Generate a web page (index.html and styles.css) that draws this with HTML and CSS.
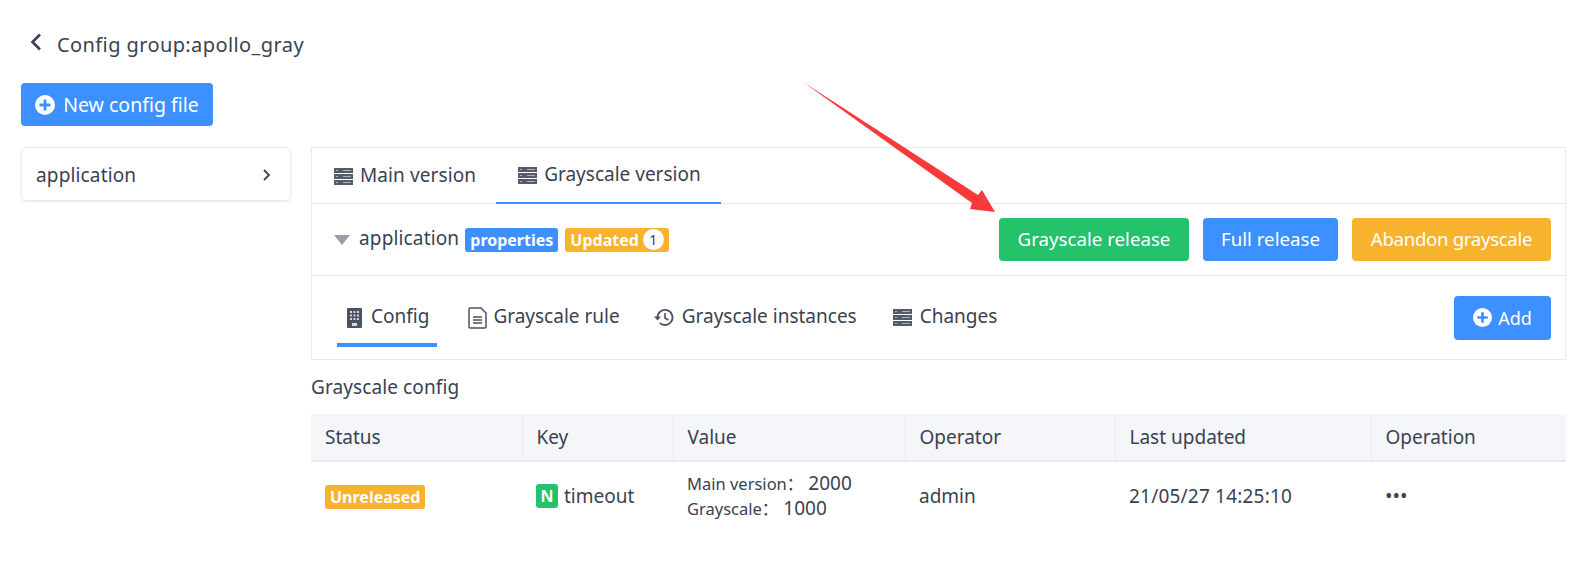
FILE: index.html
```html
<!DOCTYPE html>
<html lang="en">
<head>
  <meta charset="UTF-8">
  <title>Config group</title>
  <link rel="stylesheet" href="styles.css">
</head>
<body>
  <svg width="0" height="0" class="defs">
    <symbol id="i-server" viewBox="0 0 19 17">
      <path fill="#555b69" d="M0 0h19v5H0zM0 6h19v5H0zM0 12h19v5H0z"/>
      <path fill="#aeb2bb" d="M2 2h2v1H2zM2 8h2v1H2zM2 14h2v1H2zM9 2h8v1H9zM9 8h8v1H9zM9 14h8v1H9z"/>
    </symbol>
    <symbol id="i-plus" viewBox="0 0 20 20">
      <circle cx="10" cy="10" r="10" fill="#fff"/>
      <path fill="#3d90ff" d="M8.6 4.5h2.8v4.1h4.1v2.8h-4.1v4.1H8.6v-4.1H4.5V8.6h4.1z"/>
    </symbol>
  </svg>

  <header class="title">
    <svg class="back" width="12" height="18" viewBox="0 0 12 18"><path d="M10 1.500L2.500 9l7.500 7.500" fill="none" stroke="#3a4251" stroke-width="2.600"/></svg>
    <span>Config group:apollo_gray</span>
  </header>

  <button class="btn btn-blue btn-new"><svg width="20" height="20"><use href="#i-plus"/></svg>New config file</button>

  <div class="layout">
    <aside class="file-card">
      <span class="wide">application</span>
      <svg width="9" height="14" viewBox="0 0 9 14"><path d="M2 2l5 5-5 5" fill="none" stroke="#3a4251" stroke-width="1.8"/></svg>
    </aside>

    <main class="content">
      <section class="panel">
        <nav class="version-tabs">
          <a class="version-tab"><svg width="19" height="17"><use href="#i-server"/></svg>Main version</a>
          <a class="version-tab active"><svg width="19" height="17"><use href="#i-server"/></svg>Grayscale version</a>
        </nav>

        <div class="file-head">
          <i class="caret"></i>
          <span class="file-name wide">application</span>
          <span class="badge badge-blue">properties</span>
          <span class="badge badge-orange">Updated <b class="count">1</b></span>
          <div class="actions">
            <button class="btn btn-green">Grayscale release</button>
            <button class="btn btn-blue">Full release</button>
            <button class="btn btn-orange">Abandon grayscale</button>
          </div>
        </div>

        <div class="sub-bar">
          <nav class="sub-tabs">
            <a class="sub-tab tab-config active">
              <svg width="15" height="20" viewBox="0 0 15 20"><path fill="#4b5261" d="M1 0h13a1 1 0 011 1v18a1 1 0 01-1 1H1a1 1 0 01-1-1V1a1 1 0 011-1z"/><path fill="#d5d8de" d="M3 3h2v2H3zM6.500 3h2v2h-2zM10 3h2v2h-2zM3 6.500h2v2H3zM6.500 6.500h2v2h-2zM10 6.500h2v2h-2zM3 10h2v2H3zM6.500 10h2v2h-2zM10 10h2v2h-2zM5 15h5v3H5z"/></svg>
              Config
            </a>
            <a class="sub-tab tab-rule">
              <svg width="19" height="22" viewBox="0 0 19 22"><path d="M1 2a1 1 0 011-1h11l5 5v14a1 1 0 01-1 1H2a1 1 0 01-1-1z" fill="none" stroke="#4b5261" stroke-width="1.500"/><path d="M5 10h9M5 13h9M5 16h9" stroke="#4b5261" stroke-width="1.300"/></svg>
              Grayscale rule
            </a>
            <a class="sub-tab">
              <svg width="20" height="19" viewBox="0 0 20 19"><path d="M3.500 9.500a7.500 7.500 0 112.300 5.400" fill="none" stroke="#4b5261" stroke-width="1.800"/><path d="M0 8.500h7L3.500 12.500z" fill="#4b5261"/><path d="M11 5v5l3.500 2" fill="none" stroke="#4b5261" stroke-width="1.600"/></svg>
              Grayscale instances
            </a>
            <a class="sub-tab">
              <svg width="19" height="17"><use href="#i-server"/></svg>
              Changes
            </a>
          </nav>
          <button class="btn btn-blue btn-add"><svg width="19" height="19"><use href="#i-plus"/></svg>Add</button>
        </div>
      </section>

      <h3 class="table-title">Grayscale config</h3>

      <table class="config-table">
        <colgroup>
          <col class="c1"><col class="c2"><col class="c3"><col class="c4"><col class="c5"><col class="c6">
        </colgroup>
        <thead>
          <tr><th>Status</th><th>Key</th><th>Value</th><th>Operator</th><th>Last updated</th><th>Operation</th></tr>
        </thead>
        <tbody>
          <tr>
            <td><span class="badge badge-orange">Unreleased</span></td>
            <td><span class="key"><span class="key-n">N</span>timeout</span></td>
            <td class="value">
              <div><small>Main version：</small>2000</div>
              <div><small>Grayscale：</small>1000</div>
            </td>
            <td>admin</td>
            <td class="time">21/05/27 14:25:10</td>
            <td class="more">•••</td>
          </tr>
        </tbody>
      </table>
    </main>
  </div>

  <svg class="arrow" width="200" height="135" viewBox="0 0 200 135">
    <path fill="#f93a3a" d="M0 0L175 113 179 108 192 130 167 127 169 121z"/>
  </svg>
</body>
</html>
```

FILE: styles.css
```css
* {
  box-sizing: border-box;
}
body {
  margin: 0;
  background: #fff;
  color: #3a4251;
  font-family: "Noto Sans", "Noto Sans CJK SC", sans-serif;
  font-size: 19px;
  position: relative;
}
.defs {
  position: absolute;
}
.wide {
  letter-spacing: .15px;
}
.title {
  display: flex;
  align-items: center;
  height: 83px;
  padding: 5px 0 0 30px;
  font-size: 20px;
  letter-spacing: .4px;
}
.back {
  margin: -4px 15px 0 0;
}
.btn {
  display: inline-flex;
  align-items: center;
  justify-content: center;
  height: 43px;
  padding: 0 0 2px;
  border: 0;
  border-radius: 4px;
  color: #fff;
  font-family: inherit;
  font-size: 18.7px;
}
.btn-blue { background: #3d90ff; }
.btn-green { background: #23c26b; }
.btn-orange { background: #f7b22e; }
.btn-new {
  margin-left: 21px;
  width: 192px;
  padding: 0;
  gap: 8px;
  font-size: 19.5px;
}
.layout {
  display: flex;
  align-items: flex-start;
  gap: 20px;
  padding: 21px 13px 0 21px;
}
.file-card {
  flex: none;
  display: flex;
  align-items: center;
  justify-content: space-between;
  width: 270px;
  height: 54px;
  padding: 2px 19px 0 14px;
  border: 1px solid #e8eaef;
  border-radius: 5px;
  box-shadow: 0 1px 3px rgba(60, 70, 90, .1);
}
.content {
  flex: 1;
  min-width: 0;
}
.panel {
  border: 1px solid #e8eaef;
}
.version-tabs {
  display: flex;
  height: 56px;
  border-bottom: 1px solid #e8eaef;
}
.version-tab {
  display: flex;
  align-items: center;
  gap: 7px;
  height: 56px;
  padding: 0 20px 3px 22px;
  letter-spacing: .1px;
}
.version-tab svg {
  margin-top: 3px;
}
.version-tab.active {
  padding-right: 20px;
  border-bottom: 2px solid #3d90ff;
  letter-spacing: 0;
}
.file-head {
  display: flex;
  align-items: center;
  height: 72px;
  padding: 0 14px 0 22px;
  border-bottom: 1px solid #e8eaef;
}
.caret {
  width: 0;
  height: 0;
  margin-right: 9px;
  border: 8px solid transparent;
  border-top: 10px solid #9a9fab;
  border-bottom: 0;
}
.file-name {
  margin: -4px 6px 0 0;
}
.badge {
  display: inline-flex;
  align-items: center;
  height: 24px;
  padding: 0 5px;
  border-radius: 3px;
  color: #fff;
  font-size: 16px;
  font-weight: 700;
}
.badge-blue { background: #3d90ff; }
.badge-orange { background: #f7b22e; }
.file-head .badge + .badge {
  margin-left: 7px;
}
.count {
  display: inline-block;
  width: 21px;
  height: 21px;
  margin-left: 4px;
  border-radius: 50%;
  background: #fff;
  color: #3a4251;
  font-size: 14px;
  font-weight: 400;
  line-height: 21px;
  text-align: center;
}
.actions {
  display: flex;
  gap: 14px;
  margin-left: auto;
}
.actions .btn-green { width: 190px; }
.actions .btn-blue { width: 135px; }
.actions .btn-orange {
  width: 199px;
  letter-spacing: -.35px;
}
.sub-bar {
  display: flex;
  justify-content: space-between;
  align-items: center;
  height: 83px;
  padding: 0 14px 0 25px;
}
.sub-tabs {
  display: flex;
  gap: 19px;
  height: 71px;
  align-self: flex-start;
}
.sub-tab {
  display: flex;
  align-items: center;
  gap: 8px;
  padding: 12px 7px 0 10px;
  border-bottom: 4px solid transparent;
}
.sub-tab svg {
  margin-top: 4px;
}
.sub-tab.active {
  border-bottom-color: #3d90ff;
}
.tab-config {
  gap: 9px;
  padding-right: 8px;
}
.tab-rule {
  gap: 6px;
  padding-left: 12px;
  padding-right: 5px;
}
.btn-add {
  width: 97px;
  height: 44px;
  padding: 0;
  gap: 6px;
  font-size: 18px;
}
.table-title {
  margin: 15px 0 15px;
  font-size: 19px;
  font-weight: 400;
  line-height: 24px;
  letter-spacing: .1px;
}
.config-table {
  width: 100%;
  table-layout: fixed;
  border-collapse: collapse;
}
.c1 { width: 211px; }
.c2 { width: 151px; }
.c3 { width: 232px; }
.c4 { width: 210px; }
.c5 { width: 256px; }
.c6 { width: 195px; }
.config-table th {
  height: 47px;
  padding: 0 14px;
  background: #f4f6fa;
  border-bottom: 2px solid #e8eaef;
  border-right: 1px solid #e8eaef;
  font-weight: 400;
  text-align: left;
}
.config-table th:last-child {
  border-right: 0;
}
.config-table td {
  height: 68px;
  padding: 0 14px;
}
.key {
  display: flex;
  align-items: center;
  gap: 6px;
}
.key-n {
  width: 22px;
  height: 24px;
  border-radius: 3px;
  background: #23c26b;
  color: #fff;
  font-size: 16px;
  font-weight: 700;
  line-height: 24px;
  text-align: center;
}
.value {
  line-height: 25px;
}
.value small {
  font-size: 16.5px;
  margin-right: 5px;
}
.time {
  letter-spacing: .2px;
}
.more {
  font-size: 20px;
}
.arrow {
  position: absolute;
  left: 803px;
  top: 82px;
}
```
